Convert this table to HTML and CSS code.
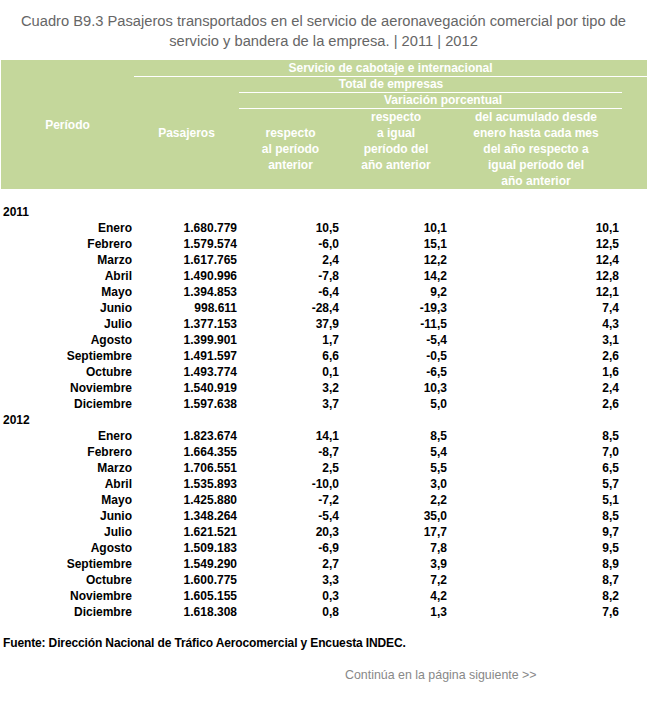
FILE: index.html
```html
<!DOCTYPE html>
<html lang="es">
<head>
<meta charset="utf-8">
<title>Cuadro B9.3</title>
<link rel="stylesheet" href="styles.css">
</head>
<body>
<div class="page">
  <h1 class="title">Cuadro B9.3 Pasajeros transportados en el servicio de aeronavegación comercial por tipo de servicio y bandera de la empresa. | 2011 | 2012</h1>
  <table class="data">
    <colgroup>
      <col class="c1"><col class="c2"><col class="c3"><col class="c4"><col class="c5"><col class="c6">
    </colgroup>
    <thead>
      <tr class="h1">
        <th rowspan="4" class="periodo">Período</th>
        <th colspan="5" class="line">Servicio de cabotaje e internacional</th>
      </tr>
      <tr class="h2">
        <th rowspan="3" class="pasajeros">Pasajeros</th>
        <th colspan="3" class="line total">Total de empresas</th>
        <th rowspan="3"></th>
      </tr>
      <tr class="h3">
        <th colspan="3" class="line variacion">Variación porcentual</th>
      </tr>
      <tr class="h4">
        <th class="mid">respecto<br>al período<br>anterior</th>
        <th class="top">respecto<br>a igual<br>período del<br>año anterior</th>
        <th class="top">del acumulado desde<br>enero hasta cada mes<br>del año respecto a<br>igual período del<br>año anterior</th>
      </tr>
    </thead>
    <tbody>
      <tr class="spacer"><td colspan="6"></td></tr>
      <tr class="year"><td>2011</td><td></td><td></td><td></td><td></td><td></td></tr>
      <tr><td>Enero</td><td>1.680.779</td><td>10,5</td><td>10,1</td><td>10,1</td><td></td></tr>
      <tr><td>Febrero</td><td>1.579.574</td><td>-6,0</td><td>15,1</td><td>12,5</td><td></td></tr>
      <tr><td>Marzo</td><td>1.617.765</td><td>2,4</td><td>12,2</td><td>12,4</td><td></td></tr>
      <tr><td>Abril</td><td>1.490.996</td><td>-7,8</td><td>14,2</td><td>12,8</td><td></td></tr>
      <tr><td>Mayo</td><td>1.394.853</td><td>-6,4</td><td>9,2</td><td>12,1</td><td></td></tr>
      <tr><td>Junio</td><td>998.611</td><td>-28,4</td><td>-19,3</td><td>7,4</td><td></td></tr>
      <tr><td>Julio</td><td>1.377.153</td><td>37,9</td><td>-11,5</td><td>4,3</td><td></td></tr>
      <tr><td>Agosto</td><td>1.399.901</td><td>1,7</td><td>-5,4</td><td>3,1</td><td></td></tr>
      <tr><td>Septiembre</td><td>1.491.597</td><td>6,6</td><td>-0,5</td><td>2,6</td><td></td></tr>
      <tr><td>Octubre</td><td>1.493.774</td><td>0,1</td><td>-6,5</td><td>1,6</td><td></td></tr>
      <tr><td>Noviembre</td><td>1.540.919</td><td>3,2</td><td>10,3</td><td>2,4</td><td></td></tr>
      <tr><td>Diciembre</td><td>1.597.638</td><td>3,7</td><td>5,0</td><td>2,6</td><td></td></tr>
      <tr class="year"><td>2012</td><td></td><td></td><td></td><td></td><td></td></tr>
      <tr><td>Enero</td><td>1.823.674</td><td>14,1</td><td>8,5</td><td>8,5</td><td></td></tr>
      <tr><td>Febrero</td><td>1.664.355</td><td>-8,7</td><td>5,4</td><td>7,0</td><td></td></tr>
      <tr><td>Marzo</td><td>1.706.551</td><td>2,5</td><td>5,5</td><td>6,5</td><td></td></tr>
      <tr><td>Abril</td><td>1.535.893</td><td>-10,0</td><td>3,0</td><td>5,7</td><td></td></tr>
      <tr><td>Mayo</td><td>1.425.880</td><td>-7,2</td><td>2,2</td><td>5,1</td><td></td></tr>
      <tr><td>Junio</td><td>1.348.264</td><td>-5,4</td><td>35,0</td><td>8,5</td><td></td></tr>
      <tr><td>Julio</td><td>1.621.521</td><td>20,3</td><td>17,7</td><td>9,7</td><td></td></tr>
      <tr><td>Agosto</td><td>1.509.183</td><td>-6,9</td><td>7,8</td><td>9,5</td><td></td></tr>
      <tr><td>Septiembre</td><td>1.549.290</td><td>2,7</td><td>3,9</td><td>8,9</td><td></td></tr>
      <tr><td>Octubre</td><td>1.600.775</td><td>3,3</td><td>7,2</td><td>8,7</td><td></td></tr>
      <tr><td>Noviembre</td><td>1.605.155</td><td>0,3</td><td>4,2</td><td>8,2</td><td></td></tr>
      <tr><td>Diciembre</td><td>1.618.308</td><td>0,8</td><td>1,3</td><td>7,6</td><td></td></tr>
    </tbody>
  </table>
  <p class="fuente">Fuente: Dirección Nacional de Tráfico Aerocomercial y Encuesta INDEC.</p>
  <p class="sigue">Continúa en la página siguiente &gt;&gt;</p>
</div>
</body>
</html>
```

FILE: styles.css
```css
html, body {
  margin: 0;
  padding: 0;
  background: #ffffff;
}

.page {
  width: 647px;
  font-family: "Liberation Sans", Arial, sans-serif;
  font-size: 12px;
  line-height: 16px;
  color: #000000;
}

.title {
  margin: 11px 0 9px 0;
  font-size: 14.7px;
  line-height: 20px;
  font-weight: normal;
  color: #666666;
  text-align: center;
}

.data {
  margin-left: 1px;
  width: 646px;
  table-layout: fixed;
  border-collapse: separate;
  border-spacing: 0;
  font-weight: bold;
}

.c1 { width: 133px; }
.c2 { width: 105px; }
.c3 { width: 103px; }
.c4 { width: 108px; }
.c5 { width: 172px; }
.c6 { width: 25px; }

.data thead th {
  background: #c4d79b;
  color: #ffffff;
  font-weight: bold;
  padding: 0;
  text-align: center;
  vertical-align: middle;
  line-height: 16px;
}

.data thead .line {
  border-bottom: 1px solid #ffffff;
}

.data .h1 th { height: 16px; }
.data .h2 th.line,
.data .h3 th.line {
  line-height: 15px;
  height: 15px;
}

.data .total { padding-right: 79px; }
.data .variacion { padding-left: 25px; }

.data .h4 th { height: 80px; }
.data .h4 th.top { vertical-align: top; }
.data .h4 th.mid { vertical-align: middle; }

.data tbody td {
  padding: 0 3px 0 0;
  height: 16px;
  text-align: right;
  white-space: nowrap;
}

.data tbody td:nth-child(1),
.data tbody td:nth-child(2) {
  padding-right: 2px;
}

.data tbody .spacer td {
  height: 15px;
}

.data tbody .year td:first-child {
  text-align: left;
  padding-left: 2px;
}

.fuente {
  margin: 15px 0 0 3px;
  font-weight: bold;
  letter-spacing: -0.13px;
}

.sigue {
  margin: 16px 0 0 345px;
  font-size: 12.4px;
  color: #888888;
}
```
